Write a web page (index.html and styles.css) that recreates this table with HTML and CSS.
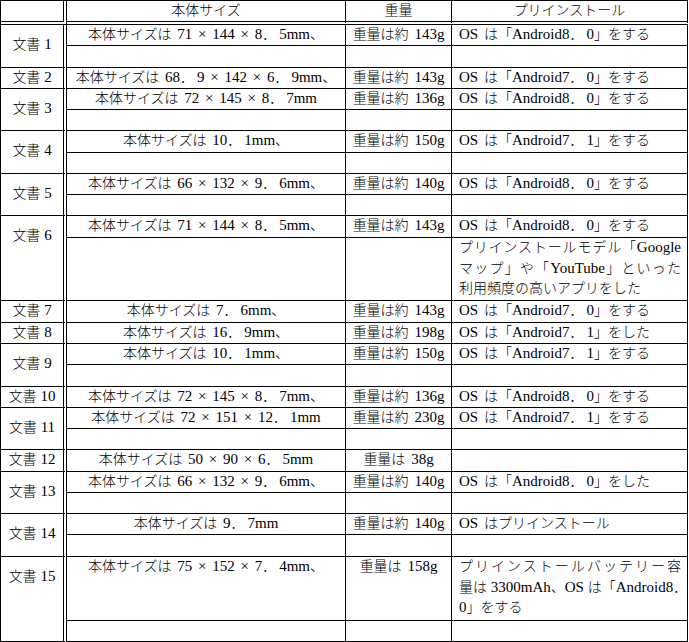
FILE: index.html
```html
<!DOCTYPE html>
<html lang="ja">
<head>
<meta charset="utf-8">
<title>仕様一覧</title>
<link rel="stylesheet" href="styles.css">
</head>
<body>
<table class="spec">
  <thead>
    <tr>
      <th class="name col-name"></th>
      <th class="col-size">本体サイズ</th>
      <th class="col-weight">重量</th>
      <th class="col-os">プリインストール</th>
    </tr>
  </thead>
  <tbody>
    <tr><td class="name ml" rowspan="2">文書<span class="l"> 1</span></td><td>本体サイズは<span class="l"> 71 × 144 × 8</span><span class="p">．</span><span class="l">5mm</span>、</td><td>重量は約<span class="l"> 143g</span></td><td class="os"><span class="l">OS </span>は「<span class="l">Android8</span><span class="p">．</span><span class="l">0</span>」をする</td></tr>
    <tr><td></td><td></td><td class="os"></td></tr>

    <tr><td class="name">文書<span class="l"> 2</span></td><td>本体サイズは<span class="l"> 68</span><span class="p">．</span><span class="l">9 × 142 × 6</span><span class="p">．</span><span class="l">9mm</span>、</td><td>重量は約<span class="l"> 143g</span></td><td class="os"><span class="l">OS </span>は「<span class="l">Android7</span><span class="p">．</span><span class="l">0</span>」をする</td></tr>

    <tr><td class="name ml" rowspan="2">文書<span class="l"> 3</span></td><td>本体サイズは<span class="l"> 72 × 145 × 8</span><span class="p">．</span><span class="l">7mm</span></td><td>重量は約<span class="l"> 136g</span></td><td class="os"><span class="l">OS </span>は「<span class="l">Android8</span><span class="p">．</span><span class="l">0</span>」をする</td></tr>
    <tr><td></td><td></td><td class="os"></td></tr>

    <tr><td class="name ml" rowspan="2">文書<span class="l"> 4</span></td><td>本体サイズは<span class="l"> 10</span><span class="p">．</span><span class="l">1mm</span>、</td><td>重量は約<span class="l"> 150g</span></td><td class="os"><span class="l">OS </span>は「<span class="l">Android7</span><span class="p">．</span><span class="l">1</span>」をする</td></tr>
    <tr><td></td><td></td><td class="os"></td></tr>

    <tr><td class="name ml" rowspan="2">文書<span class="l"> 5</span></td><td>本体サイズは<span class="l"> 66 × 132 × 9</span><span class="p">．</span><span class="l">6mm</span>、</td><td>重量は約<span class="l"> 140g</span></td><td class="os"><span class="l">OS </span>は「<span class="l">Android8</span><span class="p">．</span><span class="l">0</span>」をする</td></tr>
    <tr><td></td><td></td><td class="os"></td></tr>

    <tr><td class="name ml" rowspan="2">文書<span class="l"> 6</span></td><td>本体サイズは<span class="l"> 71 × 144 × 8</span><span class="p">．</span><span class="l">5mm</span>、</td><td>重量は約<span class="l"> 143g</span></td><td class="os"><span class="l">OS </span>は「<span class="l">Android8</span><span class="p">．</span><span class="l">0</span>」をする</td></tr>
    <tr class="tall"><td></td><td></td><td class="os para"><span class="jline">プリインストールモデル「<span class="l">Google</span></span><span class="jline">マップ」や「<span class="l">YouTube</span>」といった</span><span class="line">利用頻度の高いアプリをした</span></td></tr>

    <tr><td class="name">文書<span class="l"> 7</span></td><td>本体サイズは<span class="l"> 7</span><span class="p">．</span><span class="l">6mm</span>、</td><td>重量は約<span class="l"> 143g</span></td><td class="os"><span class="l">OS </span>は「<span class="l">Android7</span><span class="p">．</span><span class="l">0</span>」をする</td></tr>

    <tr><td class="name">文書<span class="l"> 8</span></td><td>本体サイズは<span class="l"> 16</span><span class="p">．</span><span class="l">9mm</span>、</td><td>重量は約<span class="l"> 198g</span></td><td class="os"><span class="l">OS </span>は「<span class="l">Android7</span><span class="p">．</span><span class="l">1</span>」をした</td></tr>

    <tr><td class="name ml" rowspan="2">文書<span class="l"> 9</span></td><td>本体サイズは<span class="l"> 10</span><span class="p">．</span><span class="l">1mm</span>、</td><td>重量は約<span class="l"> 150g</span></td><td class="os"><span class="l">OS </span>は「<span class="l">Android7</span><span class="p">．</span><span class="l">1</span>」をする</td></tr>
    <tr><td></td><td></td><td class="os"></td></tr>

    <tr><td class="name">文書<span class="l"> 10</span></td><td>本体サイズは<span class="l"> 72 × 145 × 8</span><span class="p">．</span><span class="l">7mm</span>、</td><td>重量は約<span class="l"> 136g</span></td><td class="os"><span class="l">OS </span>は「<span class="l">Android8</span><span class="p">．</span><span class="l">0</span>」をする</td></tr>

    <tr><td class="name ml" rowspan="2">文書<span class="l"> 11</span></td><td>本体サイズは<span class="l"> 72 × 151 × 12</span><span class="p">．</span><span class="l">1mm</span></td><td>重量は約<span class="l"> 230g</span></td><td class="os"><span class="l">OS </span>は「<span class="l">Android7</span><span class="p">．</span><span class="l">1</span>」をする</td></tr>
    <tr><td></td><td></td><td class="os"></td></tr>

    <tr><td class="name">文書<span class="l"> 12</span></td><td>本体サイズは<span class="l"> 50 × 90 × 6</span><span class="p">．</span><span class="l">5mm</span></td><td>重量は<span class="l"> 38g</span></td><td class="os"></td></tr>

    <tr><td class="name ml" rowspan="2">文書<span class="l"> 13</span></td><td>本体サイズは<span class="l"> 66 × 132 × 9</span><span class="p">．</span><span class="l">6mm</span>、</td><td>重量は約<span class="l"> 140g</span></td><td class="os"><span class="l">OS </span>は「<span class="l">Android8</span><span class="p">．</span><span class="l">0</span>」をした</td></tr>
    <tr><td></td><td></td><td class="os"></td></tr>

    <tr><td class="name ml" rowspan="2">文書<span class="l"> 14</span></td><td>本体サイズは<span class="l"> 9</span><span class="p">．</span><span class="l">7mm</span></td><td>重量は約<span class="l"> 140g</span></td><td class="os"><span class="l">OS </span>はプリインストール</td></tr>
    <tr><td></td><td></td><td class="os"></td></tr>

    <tr class="tall"><td class="name ml" rowspan="2">文書<span class="l"> 15</span></td><td>本体サイズは<span class="l"> 75 × 152 × 7</span><span class="p">．</span><span class="l">4mm</span>、</td><td>重量は<span class="l"> 158g</span></td><td class="os para"><span class="jline">プリインストールバッテリー容</span><span class="jline">量は<span class="l"> 3300mAh</span>、<span class="l">OS </span>は「<span class="l">Android8</span>．</span><span class="line"><span class="l">0</span>」をする</span></td></tr>
    <tr><td></td><td></td><td class="os"></td></tr>
  </tbody>
</table>
</body>
</html>
```

FILE: styles.css
```css
html, body {
  margin: 0;
  padding: 0;
  background: #ffffff;
}

body {
  font-family: "Liberation Serif", "Noto Sans CJK JP", serif;
  font-size: 14px;
  color: #000000;
}

.spec {
  border-collapse: separate;
  border-spacing: 0;
  table-layout: fixed;
  width: 688px;
  border-top: 1px solid #000;
  border-left: 1px solid #000;
}

.spec th,
.spec td {
  box-sizing: border-box;
  padding: 0;
  border-right: 1px solid #000;
  border-bottom: 1px solid #000;
  font-weight: 300;
  line-height: 20px;
  vertical-align: top;
  text-align: center;
  white-space: nowrap;
  overflow: visible;
}

.l {
  font-size: 15px;
  line-height: 1;
  word-spacing: 2px;
}

.p {
  margin-right: 3px;
}

.spec thead tr {
  height: 24px;
}

.spec th {
  border-bottom: 4px double #000;
}

.spec .name {
  border-right: 4px double #000;
}

.spec .name .l {
  word-spacing: 0;
}

.col-name { width: 66px; }
.col-size { width: 279px; }
.col-weight { width: 106px; }
.col-os { width: 236px; }

.spec tbody tr {
  height: 21.276px;
}

.spec tbody tr.tall {
  height: 63.83px;
}

.spec .ml {
  padding-top: 10px;
}

.spec .os {
  text-align: left;
  padding: 0 6px 0 7px;
}

.spec .para {
  line-height: 20.9px;
  white-space: normal;
}

.spec .para .l {
  word-spacing: 0;
}

.jline {
  display: block;
  text-align: justify;
  text-align-last: justify;
  white-space: nowrap;
}

.line {
  display: block;
}
```
